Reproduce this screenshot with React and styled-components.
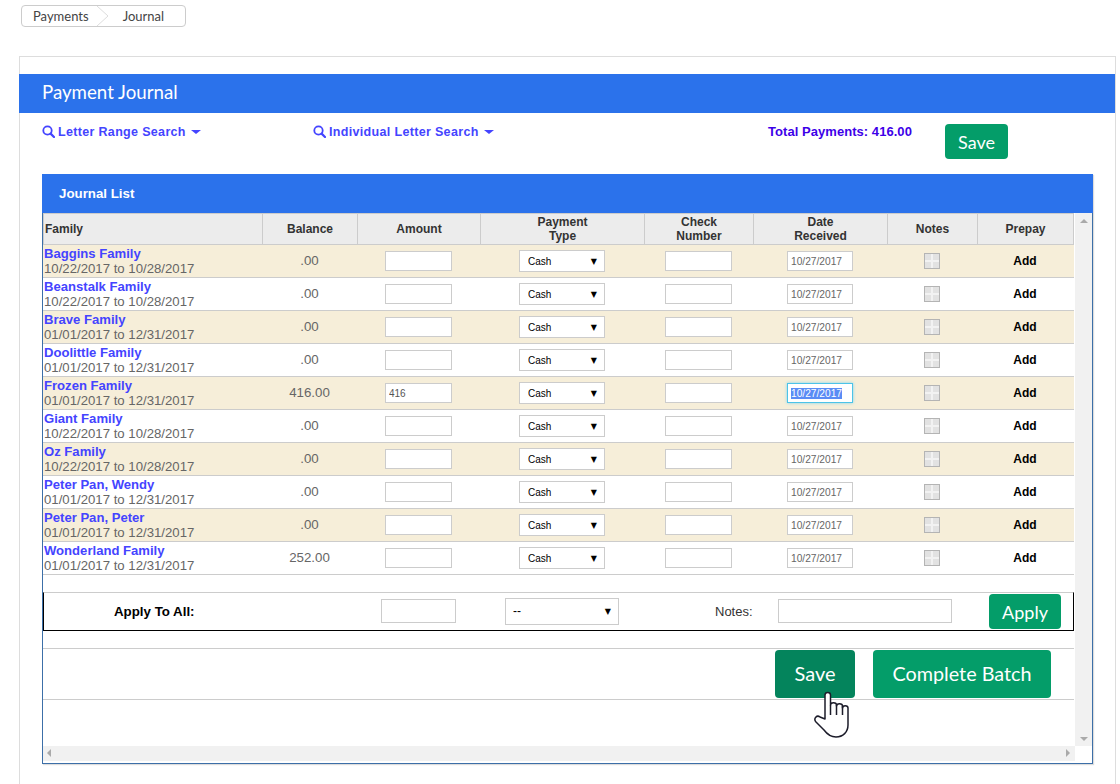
import React from 'react'
import styled, { createGlobalStyle } from 'styled-components'

const rows = [
  { name: 'Baggins Family', range: '10/22/2017 to 10/28/2017', balance: '.00' },
  { name: 'Beanstalk Family', range: '10/22/2017 to 10/28/2017', balance: '.00' },
  { name: 'Brave Family', range: '01/01/2017 to 12/31/2017', balance: '.00' },
  { name: 'Doolittle Family', range: '01/01/2017 to 12/31/2017', balance: '.00' },
  { name: 'Frozen Family', range: '01/01/2017 to 12/31/2017', balance: '416.00', amount: '416', focused: true },
  { name: 'Giant Family', range: '10/22/2017 to 10/28/2017', balance: '.00' },
  { name: 'Oz Family', range: '10/22/2017 to 10/28/2017', balance: '.00' },
  { name: 'Peter Pan, Wendy', range: '01/01/2017 to 12/31/2017', balance: '.00' },
  { name: 'Peter Pan, Peter', range: '01/01/2017 to 12/31/2017', balance: '.00' },
  { name: 'Wonderland Family', range: '01/01/2017 to 12/31/2017', balance: '252.00' },
]

const App = () => {
  return (
    <Page>
      <GlobalStyle />
      <Breadcrumb>
        <Crumb>Payments</Crumb>
        <CrumbChevron viewBox="0 0 12 20" aria-hidden="true">
          <path d="M0 0 L11 10 L0 20" fill="none" stroke="#ddd" />
        </CrumbChevron>
        <Crumb $last>Journal</Crumb>
      </Breadcrumb>

      <Panel>
        <PanelTitle>Payment Journal</PanelTitle>
        <SearchBar>
          <SearchLink><SearchIcon />Letter Range Search<Caret /></SearchLink>
          <SearchLink><SearchIcon />Individual Letter Search<Caret /></SearchLink>
          <Total>Total Payments: 416.00</Total>
          <GreenButton $w={63} $h={35} $fs={18}>Save</GreenButton>
        </SearchBar>

        <Card>
          <CardTitle>Journal List</CardTitle>
          <CardBody>
            <Scroller>
              <HeadRow>
                <HeadCell $left>Family</HeadCell>
                <HeadCell>Balance</HeadCell>
                <HeadCell>Amount</HeadCell>
                <HeadCell>Payment<br />Type</HeadCell>
                <HeadCell>Check<br />Number</HeadCell>
                <HeadCell>Date<br />Received</HeadCell>
                <HeadCell>Notes</HeadCell>
                <HeadCell>Prepay</HeadCell>
              </HeadRow>

              {rows.map((row, i) => (
                <Row key={row.name} $odd={i % 2 === 0}>
                  <FamilyCell>
                    <FamilyName>{row.name}</FamilyName>
                    <FamilyRange>{row.range}</FamilyRange>
                  </FamilyCell>
                  <BalanceCell>{row.balance}</BalanceCell>
                  <Cell><TextBox defaultValue={row.amount || ''} /></Cell>
                  <Cell>
                    <SelectWrap $w={86}>
                      <Select defaultValue="Cash"><option>Cash</option></Select>
                    </SelectWrap>
                  </Cell>
                  <Cell><TextBox /></Cell>
                  <Cell>
                    {row.focused
                      ? <FocusedDate><Selected>10/27/2017</Selected></FocusedDate>
                      : <DateBox defaultValue="10/27/2017" />}
                  </Cell>
                  <Cell><NotesIcon /></Cell>
                  <AddCell>Add</AddCell>
                </Row>
              ))}

              <ApplyRow>
                <ApplyLabel>Apply To All:</ApplyLabel>
                <ApplyInput $w={75} />
                <SelectWrap $w={114} $h={27}>
                  <Select $big defaultValue="--"><option>--</option></Select>
                </SelectWrap>
                <NotesLabel>Notes:</NotesLabel>
                <ApplyInput $w={174} />
                <ApplyButton $w={72} $h={35} $fs={18}>Apply</ApplyButton>
              </ApplyRow>

              <ActionRow>
                <ActionButton $w={80} $h={48} $fs={20} $active>Save</ActionButton>
                <ActionButton $w={178} $h={48} $fs={19.8}>Complete Batch</ActionButton>
              </ActionRow>
            </Scroller>
            <VScroll>
              <ArrowUp />
              <ArrowDown />
            </VScroll>
          </CardBody>
          <HScrollRow>
            <HScroll>
              <ArrowLeft />
              <ArrowRight />
            </HScroll>
          </HScrollRow>
        </Card>
      </Panel>

      <HandCursor viewBox="0 0 38 50" aria-hidden="true">
        <path
          d="M12 29 L12 5 C12 1.5 17.5 1.5 17.5 5 L17.5 15 C17.5 12 23.5 12 23.5 15 L23.5 16 C23.5 13 29.5 13 29.5 16 L29.5 18 C29.5 15 35 15 35 18 L35 35 C35 42 30 47 23 47 C17 47 14 44 11 40 L3 32 C0 28.5 4 24.5 7 27 Z"
          fill="#fff"
          stroke="#1c1c2a"
          strokeWidth="1.5"
          strokeLinejoin="round"
        />
        <path d="M17.5 15 L17.5 25 M23.5 15 L23.5 25 M29.5 16 L29.5 25" stroke="#1c1c2a" strokeWidth="1.5" fill="none" />
      </HandCursor>
    </Page>
  )
}

const SearchIcon = () => (
  <SearchSvg viewBox="0 0 13 13" aria-hidden="true">
    <circle cx="5.5" cy="5.5" r="4.2" fill="none" stroke="currentColor" strokeWidth="1.8" />
    <path d="M8.6 8.6 L12 12" stroke="currentColor" strokeWidth="2.2" strokeLinecap="round" />
  </SearchSvg>
)

//Style

const GlobalStyle = createGlobalStyle`
html, body{
    margin: 0;
    padding: 0;
    background: #fff;
    font-family: "Liberation Sans", Arial, sans-serif;
}
`

const Page = styled.div`
position: relative;
height: 784px;
overflow: hidden;
padding-top: 5px;
box-sizing: border-box;
`

const Breadcrumb = styled.div`
display: flex;
align-items: center;
width: 163px;
height: 20px;
margin-left: 21px;
border: 1px solid #ccc;
border-radius: 4px;
font-family: Lato, sans-serif;
font-size: 13px;
color: #444;
`

const Crumb = styled.span`
padding-left: ${props => (props.$last ? '14px' : '11px')};
`

const CrumbChevron = styled.svg`
width: 12px;
height: 20px;
margin-left: 8px;
`

const Panel = styled.div`
margin: 29px 0 0 19px;
width: 1097px;
height: 740px;
border: 1px solid #ddd;
box-sizing: border-box;
padding-top: 17px;
`

const PanelTitle = styled.div`
height: 39px;
line-height: 36px;
margin-left: -1px;
padding-left: 23px;
background: #2b72eb;
color: #fff;
font-family: Lato, sans-serif;
font-size: 18.7px;
`

const SearchBar = styled.div`
display: grid;
grid-template-columns: 271px 455px 177px auto;
height: 61px;
padding: 11px 0 0 22px;
box-sizing: border-box;
`

const SearchLink = styled.div`
display: flex;
align-items: center;
height: 15px;
color: #4444ff;
font-size: 12.5px;
font-weight: bold;
letter-spacing: 0.33px;
`

const SearchSvg = styled.svg`
width: 13px;
height: 13px;
margin-right: 3px;
`

const Caret = styled.span`
width: 0;
height: 0;
margin-left: 5px;
border-left: 5px solid transparent;
border-right: 5px solid transparent;
border-top: 4px solid currentColor;
`

const Total = styled.div`
height: 15px;
line-height: 15px;
color: #3d00e8;
font-size: 13px;
font-weight: bold;
letter-spacing: 0.05px;
`

const GreenButton = styled.button`
width: ${props => props.$w}px;
height: ${props => props.$h}px;
padding: 0;
border: none;
border-radius: 4px;
background: ${props => (props.$active ? '#04845c' : '#049d69')};
color: #fff;
font-family: Lato, sans-serif;
font-size: ${props => props.$fs}px;
`

const ApplyButton = styled(GreenButton)`
margin: 1px 0 0 37px;
`

const ActionButton = styled(GreenButton)`
padding-bottom: 2px;
`

const Card = styled.div`
width: 1051px;
height: 590px;
margin-left: 22px;
border: 1px solid #3c6fa8;
border-top: none;
box-sizing: border-box;
box-shadow: 1px 1px 1px #ddd;
`

const CardTitle = styled.div`
height: 39px;
line-height: 39px;
margin: 0 -1px;
padding-left: 17px;
background: #2b72eb;
color: #fff;
font-size: 13.3px;
font-weight: bold;
`

const CardBody = styled.div`
display: flex;
height: 533px;
`

const Scroller = styled.div`
flex: 1;
min-width: 0;
`

const VScroll = styled.div`
position: relative;
width: 17px;
background: #f1f1f1;
`

const HScrollRow = styled.div`
height: 17px;
padding-right: 17px;
`

const HScroll = styled.div`
position: relative;
height: 15px;
background: #f1f1f1;
`

const ArrowUp = styled.span`
position: absolute;
left: 5px;
top: 6px;
border-left: 4px solid transparent;
border-right: 4px solid transparent;
border-bottom: 4px solid #aaa;
`

const ArrowDown = styled.span`
position: absolute;
left: 5px;
bottom: 5px;
border-left: 4px solid transparent;
border-right: 4px solid transparent;
border-top: 4px solid #aaa;
`

const ArrowLeft = styled.span`
position: absolute;
left: 4px;
top: 3px;
border-top: 4px solid transparent;
border-bottom: 4px solid transparent;
border-right: 4px solid #aaa;
`

const ArrowRight = styled.span`
position: absolute;
right: 5px;
top: 3px;
border-top: 4px solid transparent;
border-bottom: 4px solid transparent;
border-left: 4px solid #aaa;
`

const columns = '219px 95px 123px 164px 109px 134px 90px 96px'

const HeadRow = styled.div`
display: grid;
grid-template-columns: ${columns};
height: 31px;
border-top: 1px solid #ccc;
border-left: 1px solid #ccc;
width: 1030px;
`

const HeadCell = styled.div`
display: flex;
align-items: center;
justify-content: ${props => (props.$left ? 'flex-start' : 'center')};
padding-left: ${props => (props.$left ? '1px' : '0')};
text-align: center;
background: #ececec;
border-right: 1px solid #ccc;
border-bottom: 1px solid #ccc;
box-sizing: border-box;
color: #333;
font-size: 12px;
font-weight: bold;
line-height: 14px;
`

const Row = styled.div`
display: grid;
grid-template-columns: ${columns};
width: 1031px;
height: 33px;
box-sizing: border-box;
border-bottom: 1px solid #ccc;
background: ${props => (props.$odd ? '#f6eed9' : '#fff')};
`

const Cell = styled.div`
display: flex;
align-items: center;
justify-content: center;
`

const FamilyCell = styled.div`
padding: 1px 0 0 1px;
line-height: 15px;
`

const FamilyName = styled.div`
color: #4444ff;
font-size: 13.1px;
font-weight: bold;
`

const FamilyRange = styled.div`
color: #666;
font-size: 13.2px;
`

const BalanceCell = styled(Cell)`
padding-bottom: 2px;
color: #666;
font-size: 13.3px;
`

const AddCell = styled(Cell)`
color: #000;
font-size: 12px;
font-weight: bold;
`

const TextBox = styled.input`
width: 67px;
height: 20px;
padding: 0 3px;
border: 1px solid #ccc;
box-sizing: border-box;
background: #fff;
color: #555;
font-family: "Liberation Sans", Arial, sans-serif;
font-size: 10px;
outline: none;
`

const DateBox = styled(TextBox)`
width: 66px;
color: #666;
font-size: 10.2px;
`

const FocusedDate = styled.div`
width: 66px;
height: 20px;
padding: 0 3px;
box-sizing: border-box;
border: 1px solid #4cc3e8;
box-shadow: 0 0 3px #7fd6f0;
background: #fff;
font-size: 10.2px;
line-height: 19px;
`

const Selected = styled.span`
background: #5a8cf5;
color: #fff;
`

const SelectWrap = styled.div`
position: relative;
width: ${props => props.$w}px;
height: ${props => props.$h || 22}px;
&::after{
    content: '▼';
    position: absolute;
    right: 8px;
    top: 50%;
    transform: translateY(-50%);
    color: #000;
    font-family: "DejaVu Sans", sans-serif;
    font-size: 8px;
    pointer-events: none;
}
`

const Select = styled.select`
appearance: none;
width: 100%;
height: 100%;
padding: 0 0 0 ${props => (props.$big ? '7px' : '8px')};
border: 1px solid #ccc;
border-radius: 0;
background: #fff;
color: #000;
font-family: "Liberation Sans", Arial, sans-serif;
font-size: ${props => (props.$big ? '12px' : '10px')};
outline: none;
`

const NotesIcon = styled.span`
position: relative;
display: block;
width: 16px;
height: 16px;
box-sizing: border-box;
border: 1px solid #b4b4b4;
background: #e2e2e2;
&::before, &::after{
    content: '';
    position: absolute;
    background: #f2f2f2;
}
&::before{
    left: 6px;
    top: 0;
    width: 2px;
    height: 14px;
}
&::after{
    left: 0;
    top: 6px;
    width: 14px;
    height: 2px;
}
`

const ApplyRow = styled.div`
display: flex;
align-items: center;
width: 1031px;
height: 39px;
margin-top: 17px;
padding-bottom: 1px;
box-sizing: border-box;
border-top: 1px solid #ccc;
border-left: 1px solid #000;
border-right: 1px solid #000;
border-bottom: 1px solid #000;
`

const ApplyLabel = styled.div`
width: 337px;
padding-left: 70px;
box-sizing: border-box;
color: #000;
font-size: 13.3px;
font-weight: bold;
`

const ApplyInput = styled(TextBox)`
width: ${props => props.$w}px;
height: 24px;
&:first-of-type{
    margin-right: 49px;
}
`

const NotesLabel = styled.div`
width: 159px;
padding: 0 26px 0 96px;
box-sizing: border-box;
color: #333;
font-size: 13px;
white-space: nowrap;
`

const ActionRow = styled.div`
display: flex;
gap: 18px;
width: 1031px;
height: 52px;
margin-top: 17px;
padding-left: 732px;
box-sizing: border-box;
border-top: 1px solid #ccc;
border-bottom: 1px solid #ccc;
align-items: center;
`

const HandCursor = styled.svg`
position: absolute;
left: 813px;
top: 690px;
width: 38px;
height: 50px;
`

export default App
